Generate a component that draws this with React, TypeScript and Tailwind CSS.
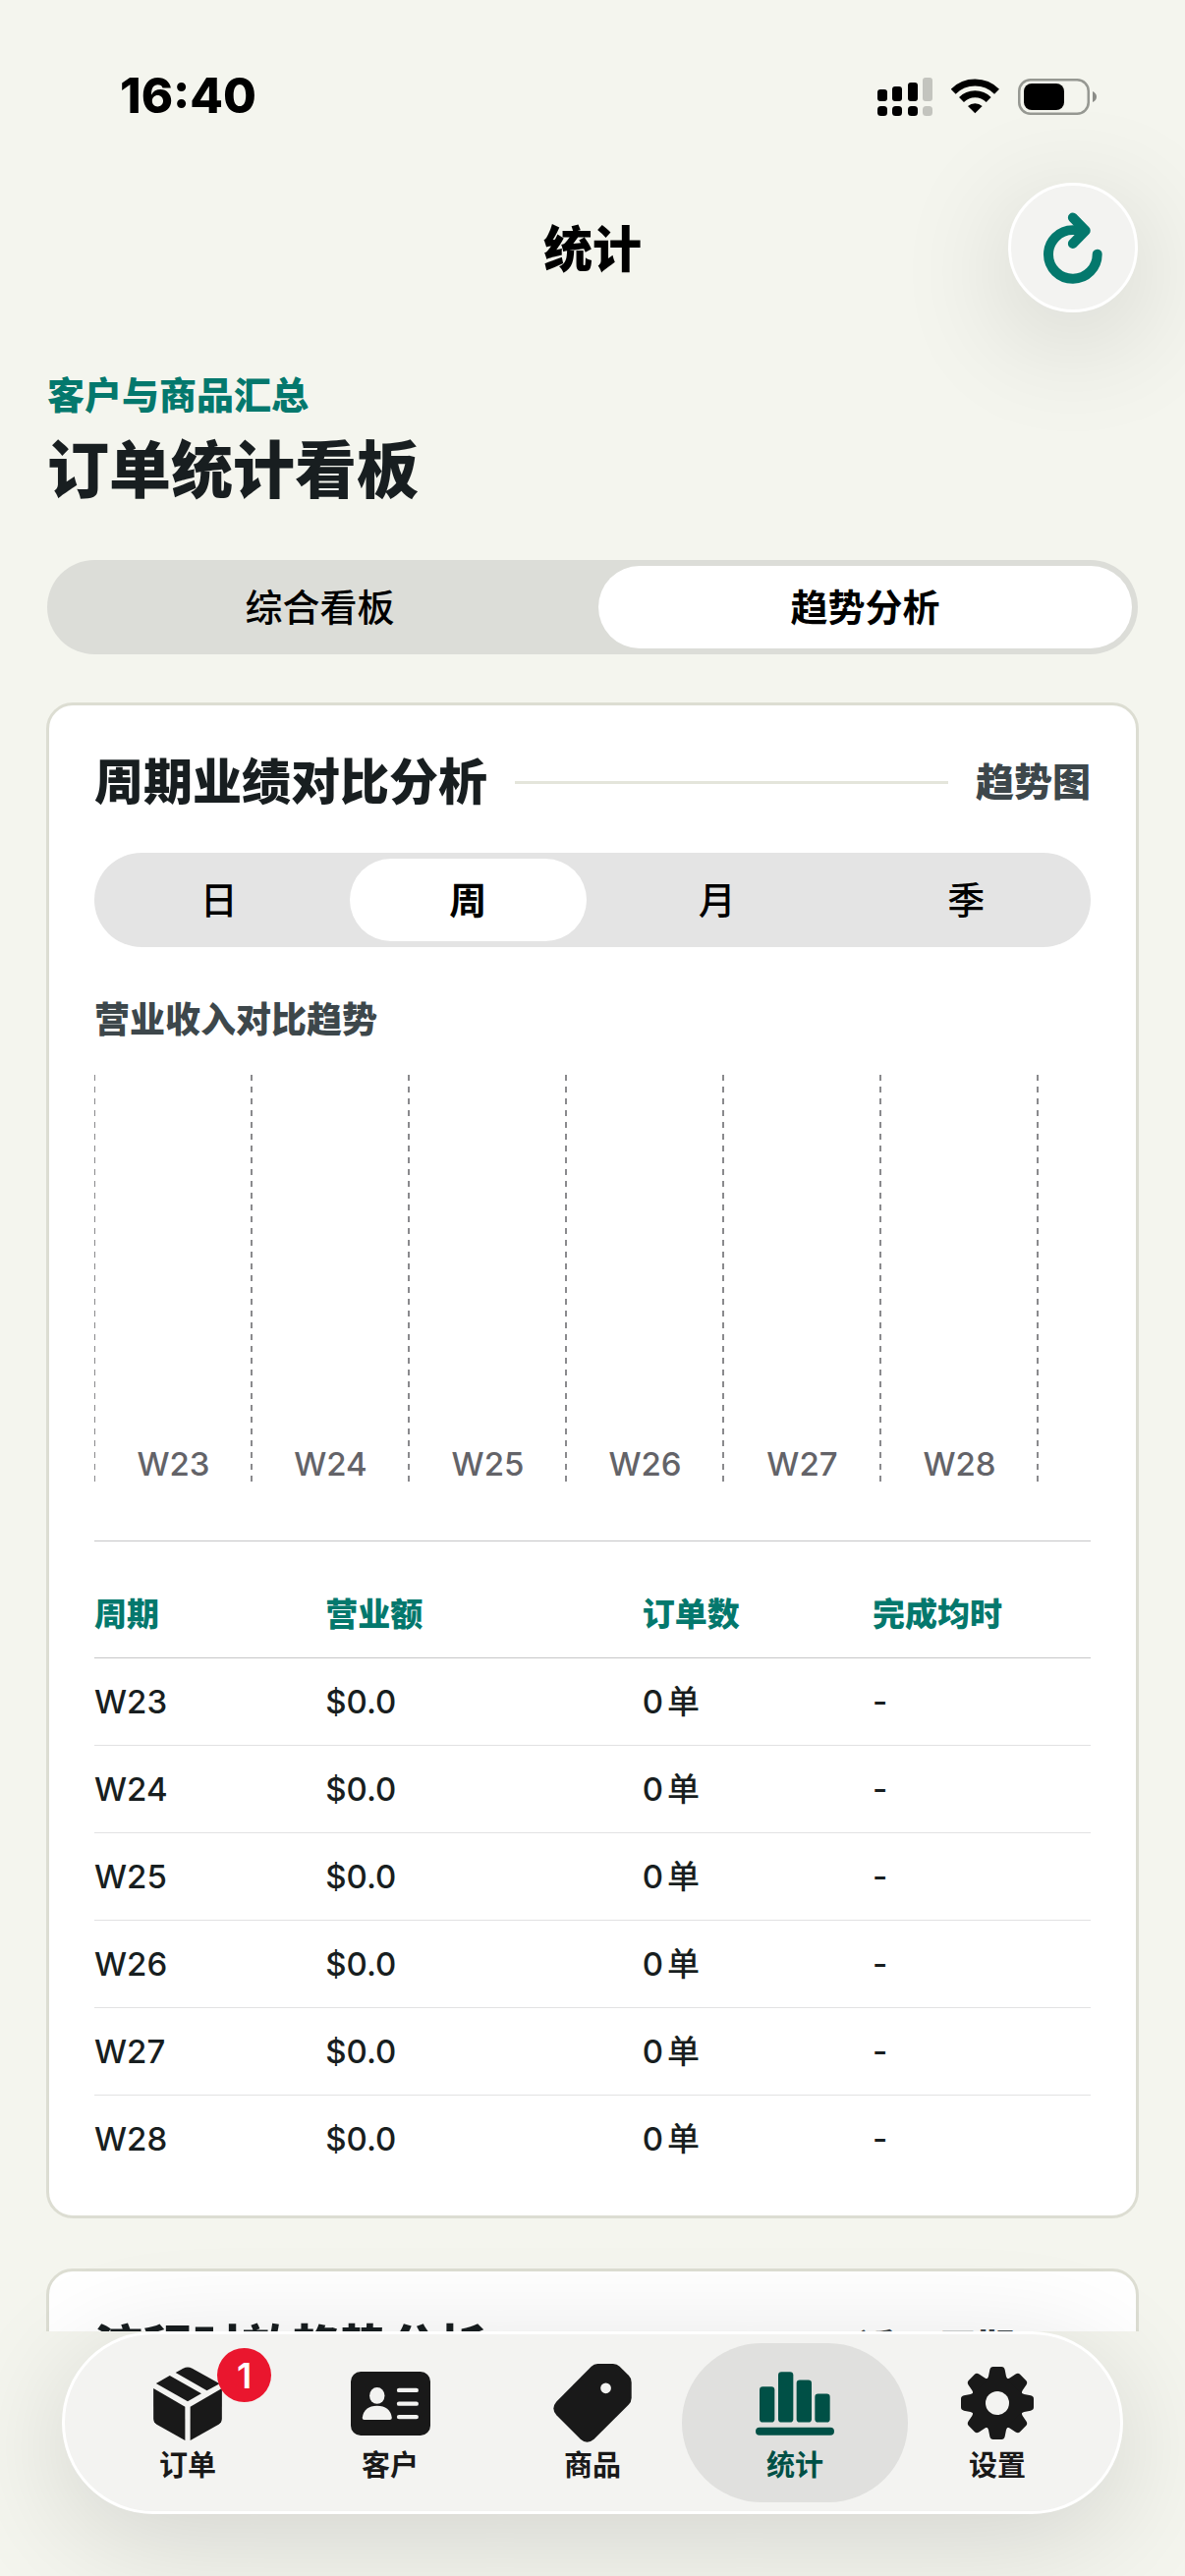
import { useState } from "react";

const WEEKS = ["W23", "W24", "W25", "W26", "W27", "W28"];

function SignalIcon() {
  return (
    <svg viewBox="0 0 56 39" className="h-[39px] w-14" aria-hidden="true">
      <rect x="0" y="12" width="10" height="12" rx="3" />
      <rect x="15" y="9" width="10" height="15" rx="3" />
      <rect x="31" y="5" width="10" height="19" rx="3" />
      <rect x="46" y="0" width="10" height="24" rx="3" fill="#c3c4be" />
      <rect x="0" y="29" width="10" height="10" rx="3.5" />
      <rect x="15" y="29" width="10" height="10" rx="3.5" />
      <rect x="31" y="29" width="10" height="10" rx="3.5" />
      <rect x="46" y="29" width="10" height="10" rx="3.5" fill="#c3c4be" />
    </svg>
  );
}

function WifiIcon() {
  return (
    <svg viewBox="324 90 147 106" className="h-9 w-[49px]" aria-hidden="true">
      <path d="M330.500 128.500 A94 94 0 0 1 463.500 128.500" fill="none" stroke="#000" strokeWidth="21" />
      <path d="M355.500 153.500 A59 59 0 0 1 438.500 153.500" fill="none" stroke="#000" strokeWidth="21" />
      <path d="M397 195 L375 173 A33 33 0 0 1 419 173 Z" />
    </svg>
  );
}

function BatteryIcon() {
  return (
    <svg viewBox="0 0 80 37" className="h-[37px] w-20" aria-hidden="true">
      <rect x="1.250" y="1.250" width="70.500" height="34.500" rx="11.500" fill="none" stroke="#969892" strokeWidth="2.500" />
      <rect x="6" y="5" width="41" height="27" rx="8" />
      <path d="M76 13 Q80 15 80 18.500 Q80 22 76 24 Z" fill="#8b8c87" />
    </svg>
  );
}

function RefreshIcon() {
  return (
    <svg
      viewBox="605 499 181 219"
      className="h-[73px] w-[60px]"
      fill="none"
      stroke="#04786d"
      strokeWidth="30"
      strokeLinecap="round"
      strokeLinejoin="round"
      aria-hidden="true"
    >
      <path d="M770 627 A75 75 0 1 1 695 553 H730" />
      <path d="M695 515 L734 555 L695 595" />
    </svg>
  );
}

function BoxIcon() {
  return (
    <svg viewBox="78 80 210 226" className="h-[75px] w-[70px]" fill="currentColor" aria-hidden="true">
      <path d="M78 146 L175 203 V306 L88 257 Q78 251 78 239 Z" />
      <path d="M288 146 L191 203 V306 L278 257 Q288 251 288 239 Z" />
      <path d="M86 131 L128 107 L225 162 L183 186 Z" />
      <path d="M146 98 L169 85 Q183 78 197 85 L281 132 L242 153 Z" />
    </svg>
  );
}

function CardIcon() {
  return (
    <svg viewBox="679 97 242 194" className="h-[65px] w-[81px]" fill="currentColor" aria-hidden="true">
      <rect x="679" y="97" width="242" height="194" rx="30" />
      <g fill="#f3f3f1">
        <ellipse cx="759" cy="170" rx="23" ry="25" />
        <path d="M714 237 Q720 201 759 201 Q798 201 804 237 Q804 243 798 243 H720 Q714 243 714 237 Z" />
        <rect x="819" y="147" width="66" height="13" rx="6.500" />
        <rect x="819" y="188" width="66" height="13" rx="6.500" />
        <rect x="819" y="228" width="66" height="13" rx="6.500" />
      </g>
    </svg>
  );
}

function TagIcon() {
  return (
    <svg viewBox="70 52 239 239" className="h-20 w-20" fill="currentColor" aria-hidden="true">
      <path d="M205 52 H252 Q264 52 272 60 L300 88 Q308 96 308 108 V156 Q308 168 299 177 L194 281 Q173 299 153 281 L80 208 Q62 188 80 167 L186 60 Q194 52 205 52 Z" />
      <circle cx="230" cy="126" r="16" fill="#f3f3f1" />
    </svg>
  );
}

function BarsIcon() {
  return (
    <svg viewBox="686 67 240 194" className="h-[65px] w-20" fill="currentColor" aria-hidden="true">
      <rect x="698" y="112" width="46" height="109" rx="10" />
      <rect x="755" y="67" width="46" height="154" rx="10" />
      <rect x="811" y="92" width="46" height="129" rx="10" />
      <rect x="867" y="134" width="46" height="87" rx="10" />
      <rect x="686" y="237" width="240" height="24" rx="12" />
    </svg>
  );
}

function GearIcon() {
  return (
    <svg viewBox="-111 -111 222 222" className="h-[74px] w-[74px]" fill="currentColor" aria-hidden="true">
      <circle r="81" />
      {[0, 45, 90, 135, 180, 225, 270, 315].map((angle) => (
        <path
          key={angle}
          transform={`rotate(${angle})`}
          d="M-34 -72 Q-28 -76 -27 -82 L-23 -102 Q-21 -111 -13 -111 H13 Q21 -111 23 -102 L27 -82 Q28 -76 34 -72 Z"
        />
      ))}
      <circle r="36" fill="#f3f3f1" />
    </svg>
  );
}

function Segmented({
  label,
  options,
  initial,
  track,
}: {
  label: string;
  options: string[];
  initial: string;
  track: string;
}) {
  const [value, setValue] = useState(initial);
  return (
    <div role="group" aria-label={label} className={`flex h-24 rounded-full ${track}`}>
      {options.map((option) => (
        <button
          key={option}
          type="button"
          aria-pressed={option === value}
          onClick={() => setValue(option)}
          className={`m-1.5 flex-1 rounded-full text-[38px] leading-[48px] text-black ${
            option === value ? "bg-white font-semibold" : "font-medium"
          }`}
        >
          {option}
        </button>
      ))}
    </div>
  );
}

function CardHeader({ title, note }: { title: string; note: string }) {
  return (
    <div className="flex items-center gap-7">
      <h2 className="text-[50px] leading-[60px] font-extrabold text-[#181e20]">{title}</h2>
      <span className="h-[3px] flex-1 bg-[#e4e5db]" />
      <span className="text-[39px] leading-[48px] font-extrabold text-[#3d474b]">{note}</span>
    </div>
  );
}

function TrendChart() {
  return (
    <div className="grid h-[414px] grid-cols-[repeat(6,160fr)_54fr]">
      {WEEKS.map((week, index) => (
        <div key={week} className="flex">
          <span
            className={`bg-[repeating-linear-gradient(to_bottom,#8a8a8d_0_6px,transparent_6px_12px)] ${
              index === 0 ? "w-px" : "-ml-px w-0.5"
            }`}
          />
          <span className="flex-1 self-end text-center text-[33px] leading-9 font-medium text-[#636368]">{week}</span>
        </div>
      ))}
      <span className="-ml-px w-0.5 bg-[repeating-linear-gradient(to_bottom,#8a8a8d_0_6px,transparent_6px_12px)]" />
    </div>
  );
}

function PeriodTable() {
  return (
    <table className="mt-[60px] w-full table-fixed border-collapse border-t border-[#c6c6c8] text-left text-[33px] leading-10">
      <colgroup>
        <col className="w-[23.2%]" />
        <col className="w-[31.8%]" />
        <col className="w-[23.1%]" />
        <col />
      </colgroup>
      <thead className="text-[#04786d]">
        <tr className="h-[119px] border-b border-[#c6c6c8]">
          {["周期", "营业额", "订单数", "完成均时"].map((name) => (
            <th key={name} scope="col" className="pt-[30px] font-extrabold">
              {name}
            </th>
          ))}
        </tr>
      </thead>
      <tbody className="font-medium text-[#181e20]">
        {WEEKS.map((week) => (
          <tr key={week} className="h-[89px] border-b border-[#e2e2e3] last:border-b-0">
            <td>{week}</td>
            <td>$0.0</td>
            <td>
              0<span className="ml-1">单</span>
            </td>
            <td>-</td>
          </tr>
        ))}
      </tbody>
    </table>
  );
}

const TABS = [
  { name: "订单", Icon: BoxIcon, badge: 1 },
  { name: "客户", Icon: CardIcon },
  { name: "商品", Icon: TagIcon },
  { name: "统计", Icon: BarsIcon, current: true },
  { name: "设置", Icon: GearIcon },
];

function TabBar() {
  return (
    <nav
      aria-label="主导航"
      className="mx-[63px] mb-[63px] grid grid-cols-5 rounded-full border-[3px] border-white bg-[#f3f3f1] px-[22px] py-[9px] shadow-[0_24px_120px_rgba(0,0,0,0.14)]"
    >
      {TABS.map(({ name, Icon, badge, current }) => (
        <button
          key={name}
          type="button"
          aria-current={current ? "page" : undefined}
          className={`-mx-3 flex flex-col items-center gap-1.5 rounded-full pt-[21px] pb-[19px] text-[29px] leading-9 ${
            current ? "bg-[#e0e0de] font-bold text-[#005046]" : "font-semibold text-[#191919]"
          }`}
        >
          <span className="relative flex h-20 items-center justify-center">
            <Icon />
            {badge && (
              <span className="absolute -top-4 left-[65px] flex h-[55px] w-[55px] items-center justify-center rounded-full bg-[#ea162e] text-[36px] leading-none font-semibold text-white">
                {badge}
              </span>
            )}
          </span>
          {name}
        </button>
      ))}
    </nav>
  );
}

export default function App() {
  return (
    <div className="flex h-screen flex-col overflow-hidden bg-[#f4f5ee] font-['Inter','Noto_Sans_CJK_SC',sans-serif]">
      <main className="min-h-0 flex-1 overflow-hidden px-12">
        <div className="flex h-[186px] items-start justify-between pt-[68px] pr-[42px] pl-[74px]">
          <span className="text-[49px] leading-[60px] font-extrabold text-black">16:40</span>
          <span className="flex h-[60px] items-center gap-[19px]">
            <SignalIcon />
            <WifiIcon />
            <BatteryIcon />
          </span>
        </div>

        <header className="grid grid-cols-[1fr_auto_1fr] items-center">
          <h1 className="col-start-2 pt-1 text-[50px] leading-[60px] font-extrabold text-black">统计</h1>
          <button
            type="button"
            aria-label="刷新"
            className="flex h-[132px] w-[132px] items-center justify-center justify-self-end rounded-full border-[3px] border-white bg-[#f3f3f1] shadow-[0_24px_120px_rgba(0,0,0,0.16)]"
          >
            <RefreshIcon />
          </button>
        </header>

        <section className="pt-[60px] pb-14">
          <p className="text-[38px] leading-[48px] font-extrabold text-[#04786d]">客户与商品汇总</p>
          <p className="mt-4 text-[63px] leading-[72px] font-extrabold text-[#181e20]">订单统计看板</p>
        </section>

        <Segmented label="视图" options={["综合看板", "趋势分析"]} initial="趋势分析" track="bg-[#dcddd8]" />

        <section className="-mx-px mt-[49px] rounded-[27px] border-[3px] border-[#dcddd2] bg-white px-[46px] pt-12 pb-[33px]">
          <CardHeader title="周期业绩对比分析" note="趋势图" />
          <div className="mt-[42px]">
            <Segmented label="周期" options={["日", "周", "月", "季"]} initial="周" track="bg-[#e4e4e4]" />
          </div>
          <h3 className="mt-[50px] mb-8 text-[36px] leading-[48px] font-extrabold text-[#3d474b]">营业收入对比趋势</h3>
          <TrendChart />
          <PeriodTable />
        </section>

        <section className="-mx-px mt-[51px] rounded-[27px] border-[3px] border-[#dcddd2] bg-white px-[46px] pt-12 pb-12">
          <CardHeader title="流程时效趋势分析" note="近 6 周期 (天)" />
        </section>
      </main>

      <footer className="relative">
        <TabBar />
      </footer>
    </div>
  );
}
